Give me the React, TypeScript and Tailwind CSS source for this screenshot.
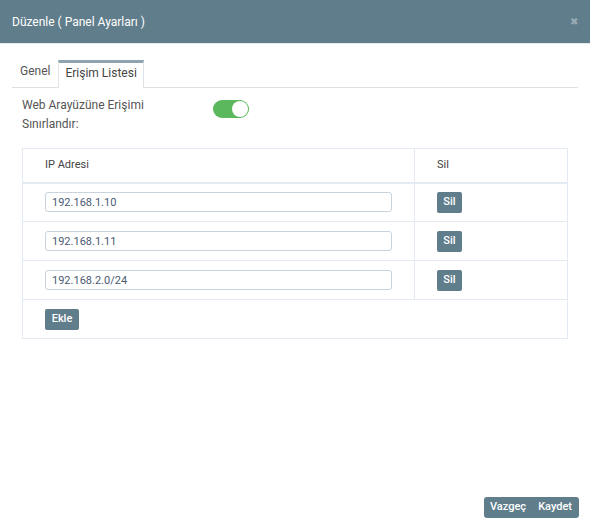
import { useState } from 'react';

const ips = ['192.168.1.10', '192.168.1.11', '192.168.2.0/24'];

export default function App() {
  const [enabled, setEnabled] = useState(true);
  const [rows, setRows] = useState(ips);

  return (
    <div className="flex h-[532px] w-[590px] flex-col bg-white text-[12px] text-[#555] [font-family:Roboto,'Noto_Sans',sans-serif]">
      <div className="flex h-[44px] items-center justify-between border-b border-[#e5e9ec] bg-[#607d8b] pl-3 pr-3">
        <span className="text-white">Düzenle ( Panel Ayarları )</span>
        <span className="text-[10px] leading-none text-[#9aabb4]">✖</span>
      </div>

      <div className="flex flex-1 flex-col px-3 pt-[16px]">
        <div className="flex h-[28px] items-end border-b border-[#e0e0e0]">
          <button className="px-[8px] pb-[7px] text-[#555]">Genel</button>
          <button className="-mb-px h-[28px] border-x border-t-[3px] border-[#dde3e6] border-t-[#90a4ae] bg-white px-[6px] pb-[5px] text-[#444]">
            Erişim Listesi
          </button>
        </div>

        <div className="mt-[8px] flex items-start px-[10px]">
          <div className="w-[191px] leading-[19px] text-[#555]">
            Web Arayüzüne Erişimi
            <br />
            Sınırlandır:
          </div>
          <button
            onClick={() => setEnabled(!enabled)}
            className={`mt-[4px] flex h-[18px] w-[36px] items-center rounded-full p-[1px] ${enabled ? 'justify-end bg-[#5cb85c]' : 'justify-start bg-[#ccc]'}`}
          >
            <span className="h-[16px] w-[16px] rounded-full bg-white" />
          </button>
        </div>

        <table className="mx-[10px] mt-[14px] w-[546px] border-collapse border border-[#e3eaf1] text-[11px]">
          <thead>
            <tr className="h-[34px] border-b-2 border-[#e3eaf1] text-left">
              <th className="pl-[22px] font-normal text-[#444]">IP Adresi</th>
              <th className="w-[153px] border-l border-[#e3eaf1] pl-[22px] font-normal text-[#444]">Sil</th>
            </tr>
          </thead>
          <tbody>
            {rows.map((ip, i) => (
              <tr key={i} className="h-[39px] border-b border-[#e3eaf1]">
                <td className="pl-[22px] pr-[22px]">
                  <input
                    defaultValue={ip}
                    className="h-[20px] w-full rounded-[3px] border border-[#c9d3de] px-[6px] text-[11px] text-[#4a5a73] outline-none"
                  />
                </td>
                <td className="border-l border-[#e3eaf1] pl-[22px]">
                  <button
                    onClick={() => setRows(rows.filter((_, j) => j !== i))}
                    className="h-[21px] w-[25px] rounded-[2px] bg-[#607d8b] text-[11px] font-medium text-white"
                  >
                    Sil
                  </button>
                </td>
              </tr>
            ))}
            <tr className="h-[39px]">
              <td colSpan={2} className="pl-[22px]">
                <button
                  onClick={() => setRows([...rows, ''])}
                  className="h-[21px] w-[34px] rounded-[2px] bg-[#607d8b] text-[11px] font-medium text-white"
                >
                  Ekle
                </button>
              </td>
            </tr>
          </tbody>
        </table>

        <div className="mt-auto flex justify-end pb-[14px] pr-[-1px]">
          <div className="-mr-[1px] flex h-[21px] items-center rounded-[3px] bg-[#607d8b] text-[11px] font-medium text-white">
            <button className="pl-[6px] pr-[6px]">Vazgeç</button>
            <button className="pl-[6px] pr-[7px]">Kaydet</button>
          </div>
        </div>
      </div>
    </div>
  );
}
